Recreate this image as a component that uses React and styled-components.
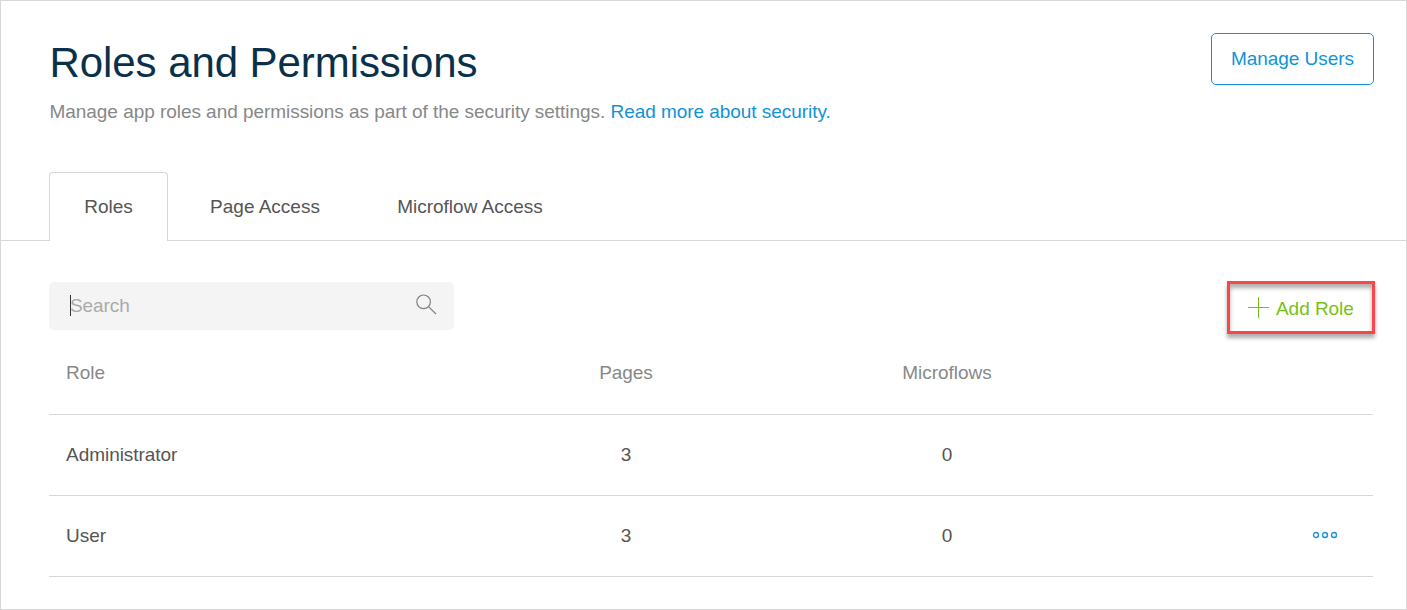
import React from 'react';
import styled, { createGlobalStyle } from 'styled-components';

const Global = createGlobalStyle`
  * { box-sizing: border-box; }
  body { margin: 0; background: #fff; font-family: "Liberation Sans", Arial, sans-serif; font-size: 19px; color: #555; }
`;
const Page = styled.main`
  width: 1407px; height: 610px; border: 1px solid #d7d7d7; overflow: hidden;
`;
const Header = styled.header`
  display: flex; justify-content: space-between; align-items: flex-start;
  height: 171px; padding: 32px 32px 0 48.5px;
`;
const Title = styled.h1`
  margin: 5px 0 0; font-size: 42px; line-height: 50px; font-weight: 400; color: #0a3149; letter-spacing: -0.07px; white-space: nowrap;
`;
const Lead = styled.p`
  margin: 13px 0 0; line-height: 22px; color: #888; letter-spacing: -0.045px; white-space: nowrap;
`;
const Link = styled.a`
  color: #0f93d9; text-decoration: none;
`;
const OutlineButton = styled.button`
  width: 163px; height: 52px; padding: 0; border: 1px solid #0f93d9; border-radius: 5px; background: #fff;
  color: #0f93d9; font: inherit; letter-spacing: -0.05px;
`;
const Tabs = styled.nav`
  display: flex; height: 69px; padding-left: 48px; box-shadow: inset 0 -1px #d7d7d7;
`;
const Tab = styled.button`
  width: ${p => p.$width}px; height: 69px; padding: 0; font: inherit; color: #555;
  border: 1px solid ${p => (p.$active ? '#d7d7d7' : 'transparent')};
  border-bottom: 0; border-radius: 4px 4px 0 0; background: ${p => (p.$active ? '#fff' : 'transparent')};
`;
const Content = styled.section`
  padding: 40px 33px 0 48px;
`;
const Toolbar = styled.div`
  display: flex; justify-content: space-between; height: 50px; margin-right: -2px;
`;
const SearchBox = styled.div`
  display: flex; align-items: center; width: 405px; height: 48px; margin-top: 1px; padding: 0 17px 0 21px;
  border-radius: 5px; background: #f4f4f4; color: #aaa;
`;
const Caret = styled.span`
  width: 1px; height: 21px; background: #333; margin: 0 -1px 1px 0;
`;
const Placeholder = styled.span`
  flex: 1; line-height: 22px; letter-spacing: -0.1px;
`;
const SearchIcon = styled.svg`
  width: 21px; height: 21px; margin-bottom: 3px;
`;
const AddButton = styled.button`
  display: flex; align-items: center; width: 148px; height: 53px; padding: 0 0 0 18px; gap: 7px;
  border: 3px solid #fb4548; background: #fff; color: #76c213; font: inherit; white-space: nowrap;
  box-shadow: 0 4px 4px rgba(0, 0, 0, 0.32), inset 0 4px 4px rgba(0, 0, 0, 0.32);
`;
const AddLabel = styled.span`
  padding-top: 2px; letter-spacing: -0.05px;
`;
const Table = styled.div`
  display: grid;
`;
const Row = styled.div`
  display: grid; grid-template-columns: 500px 154px 488px 1fr; align-items: center;
  height: ${p => (p.$head ? 84 : 81)}px; padding-top: ${p => (p.$head ? 1 : 0)}px; border-bottom: 1px solid #d7d7d7;
  color: ${p => (p.$head ? '#888' : '#555')}; letter-spacing: -0.04px;
`;
const Name = styled.span`
  padding-left: 17px;
`;
const Count = styled.span`
  text-align: center;
`;
const More = styled.button`
  justify-self: end; display: flex; padding: 0; margin: 0 35px 2px 0; border: 0; background: none;
`;

const roles = [
  { name: 'Administrator', pages: 3, microflows: 0 },
  { name: 'User', pages: 3, microflows: 0, editable: true },
];

export default function App() {
  return (
    <Page>
      <Global />
      <Header>
        <div>
          <Title>Roles and Permissions</Title>
          <Lead>Manage app roles and permissions as part of the security settings. <Link>Read more about security.</Link></Lead>
        </div>
        <OutlineButton>Manage Users</OutlineButton>
      </Header>
      <Tabs>
        <Tab $active $width={119}>Roles</Tab>
        <Tab $width={194}>Page Access</Tab>
        <Tab $width={216}>Microflow Access</Tab>
      </Tabs>
      <Content>
        <Toolbar>
          <SearchBox>
            <Caret />
            <Placeholder>Search</Placeholder>
            <SearchIcon viewBox="0 0 21 21" fill="none" stroke="#808080" strokeWidth="1.2">
              <circle cx="7.6" cy="7.8" r="6.8" /><path d="M12.5 12.6L20 20" />
            </SearchIcon>
          </SearchBox>
          <AddButton>
            <svg width="21" height="21" viewBox="0 0 21 21" stroke="#76c213"><path d="M0 10.5H21M10.5 0V21" /></svg>
            <AddLabel>Add Role</AddLabel>
          </AddButton>
        </Toolbar>
        <Table>
          <Row $head><Name>Role</Name><Count>Pages</Count><Count>Microflows</Count></Row>
          {roles.map(r => (
            <Row key={r.name}>
              <Name>{r.name}</Name><Count>{r.pages}</Count><Count>{r.microflows}</Count>
              {r.editable && (
                <More aria-label="More">
                  <svg width="26" height="8" viewBox="0 0 26 8" fill="none" stroke="#1a93d8" strokeWidth="1.4">
                    <circle cx="4" cy="4" r="2.5" /><circle cx="13" cy="4" r="2.5" /><circle cx="22" cy="4" r="2.5" />
                  </svg>
                </More>
              )}
            </Row>
          ))}
        </Table>
      </Content>
    </Page>
  );
}
